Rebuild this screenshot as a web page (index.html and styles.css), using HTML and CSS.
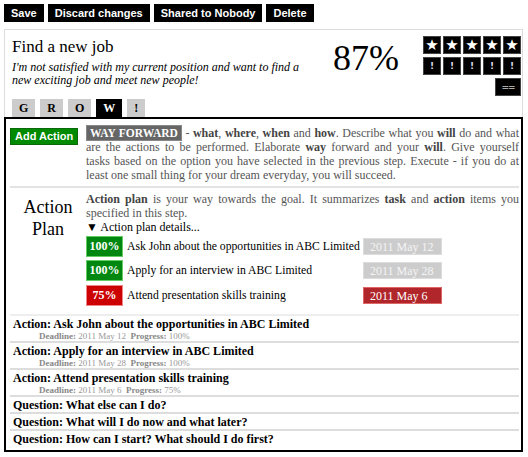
FILE: index.html
```html
<!DOCTYPE html>
<html>
<head>
<meta charset="utf-8">
<link rel="stylesheet" href="styles.css">
</head>
<body>
<div class="toolbar">
  <button class="tbtn">Save</button>
  <button class="tbtn">Discard changes</button>
  <button class="tbtn">Shared to Nobody</button>
  <button class="tbtn">Delete</button>
</div>
<div class="goal">
  <div class="goal-head">
    <div class="goal-text">
      <h1 class="title">Find a new job</h1>
      <p class="subtitle">I'm not satisfied with my current position and want to find a new exciting job and meet new people!</p>
    </div>
    <div class="percent">87%</div>
    <div class="ratings">
      <div class="rrow">
        <span class="sq star">★</span><span class="sq star">★</span><span class="sq star">★</span><span class="sq star">★</span><span class="sq star">★</span>
      </div>
      <div class="rrow">
        <span class="sq bang">!</span><span class="sq bang">!</span><span class="sq bang">!</span><span class="sq bang">!</span><span class="sq bang">!</span>
      </div>
      <div class="rrow">
        <span class="sq eq">==</span>
      </div>
    </div>
  </div>
  <div class="tabs">
    <span class="tab">G</span><span class="tab">R</span><span class="tab">O</span><span class="tab active">W</span><span class="tab">!</span>
  </div>
</div>
<div class="main">
  <div class="sec">
    <div class="side"><button class="add">Add Action</button></div>
    <p class="desc">
      <span class="ln"><span class="wf">WAY FORWARD</span> - <b>what</b>, <b>where</b>, <b>when</b> and <b>how</b>. Describe what you <b>will</b> do and what</span>
      <span class="ln">are the actions to be performed. Elaborate <b>way</b> forward and your <b>will</b>. Give yourself</span>
      <span class="ln">tasks based on the option you have selected in the previous step. Execute - if you do at</span>
      <span class="ln last">least one small thing for your dream everyday, you will succeed.</span>
    </p>
  </div>
  <div class="sec plan">
    <div class="side"><div class="plan-title">Action Plan</div></div>
    <div class="plan-body">
      <p class="desc"><b>Action plan</b> is your way towards the goal. It summarizes <b>task</b> and <b>action</b> items you specified in this step.</p>
      <div class="details">▼ Action plan details...</div>
      <div class="prow"><span class="badge ok">100%</span><span class="ptext">Ask John about the opportunities in ABC Limited</span><span class="date">2011 May 12</span></div>
      <div class="prow"><span class="badge ok">100%</span><span class="ptext">Apply for an interview in ABC Limited</span><span class="date">2011 May 28</span></div>
      <div class="prow"><span class="badge bad">75%</span><span class="ptext">Attend presentation skills training</span><span class="date late">2011 May 6</span></div>
    </div>
  </div>
  <div class="list">
    <div class="item first">
      <div class="ititle">Action: Ask John about the opportunities in ABC Limited</div>
      <div class="meta"><b>Deadline:</b> 2011 May 12 &nbsp;<b>Progress:</b> 100%</div>
    </div>
    <div class="item">
      <div class="ititle">Action: Apply for an interview in ABC Limited</div>
      <div class="meta"><b>Deadline:</b> 2011 May 28 &nbsp;<b>Progress:</b> 100%</div>
    </div>
    <div class="item">
      <div class="ititle">Action: Attend presentation skills training</div>
      <div class="meta"><b>Deadline:</b> 2011 May 6 &nbsp;<b>Progress:</b> 75%</div>
    </div>
    <div class="item"><div class="ititle">Question: What else can I do?</div></div>
    <div class="item"><div class="ititle">Question: What will I do now and what later?</div></div>
    <div class="item"><div class="ititle">Question: How can I start? What should I do first?</div></div>
  </div>
</div>
</body>
</html>
```
FILE: styles.css
```css
* { box-sizing: border-box; }
body {
  margin: 0;
  padding: 4px;
  font-family: "Liberation Serif", serif;
  color: #000;
  background: #fff;
  width: 528px;
}
.toolbar { display: flex; gap: 4px; }
.tbtn {
  height: 18px;
  padding: 0 7px;
  border: 0;
  background: #000;
  color: #fff;
  font: bold 11px "Liberation Sans", Arial, sans-serif;
}
.goal {
  margin-top: 7px;
  border-top: 1px solid #ddd;
  border-left: 1px solid #ddd;
  border-right: 1px solid #ddd;
  width: 519px;
}
.goal-head { display: flex; padding: 6px 1px 0 7px; }
.goal-text { width: 295px; flex: none; }
.title { margin: 0; font-weight: normal; font-size: 17px; line-height: 22px; }
.subtitle { margin: 3px 0 0; font-style: italic; font-size: 12px; line-height: 13px; }
.percent { font-size: 36px; line-height: 40px; margin: 2px 0 0 26px; width: 80px; flex: none; }
.ratings { display: flex; flex-direction: column; align-items: flex-end; gap: 3px; margin-left: auto; }
.rrow { display: flex; gap: 2px; }
.sq {
  width: 18px; height: 18px;
  background: #000;
  border: 1px solid #444;
  color: #fff;
  display: flex; align-items: center; justify-content: center;
  font: 15px "DejaVu Sans", sans-serif;
}
.bang { font: bold 9px "DejaVu Sans", sans-serif; color: #dde; }
.eq { width: 26px; font: bold 9px "DejaVu Sans", sans-serif; letter-spacing: -1px; color: #aaa; }
.tabs { display: flex; gap: 5px; padding-left: 7px; margin-top: 3px; }
.tab {
  height: 18px; padding: 0 7px;
  background: #ccc;
  font-weight: bold; font-size: 12px; line-height: 19px;
}
.tab.active { background: #000; color: #fff; }
.main {
  border: 2px solid #000;
  width: 519px;
  padding: 7px 2px 4px 4px;
}
.sec { display: flex; }
.side { width: 76px; flex: none; }
.add {
  height: 17px; margin-top: -1px;
  background: #008a00; color: #fff; border: 1px solid #0a6a0a;
  font: bold 11px "Liberation Sans", Arial, sans-serif; padding: 0 4px;
}
.desc {
  margin: 0; flex: 1;
  text-align: justify;
  color: #555; font-size: 12px; line-height: 14px;
}
.ln { display: block; text-align: justify; text-align-last: justify; }
.ln.last { text-align-last: left; }
.desc b { color: #444; }
.wf { background: #666; color: #fff; font-weight: bold; font-size: 11.5px; padding: 1px 3px; border: 1px solid #888; }
.plan { border-top: 2px solid #e3e3e3; margin-top: 4px; padding-top: 4px; }
.plan-title { font-size: 18px; line-height: 22px; text-align: center; padding-top: 4px; }
.plan-body { flex: 1; }
.details { font-size: 12px; line-height: 14px; }
.prow { display: flex; align-items: center; height: 24.5px; font-size: 12px; }
.badge {
  width: 37px; height: 21px; flex: none;
  color: #fff; font-weight: bold; font-size: 12px;
  display: flex; align-items: center; justify-content: center;
  border: 1px solid #6c6;
}
.badge.ok { background: #00870f; }
.badge.bad { background: #cc0000; border-color: #e88; }
.ptext { width: 240px; padding-left: 4px; white-space: nowrap; flex: none; font-size: 11.7px; }
.date {
  width: 79px; height: 17px; background: #ccc; color: #f4f4f4;
  padding-left: 6px; line-height: 16px; font-size: 12px;
  border: 1px solid #ddd;
}
.date.late { background: #b0262a; border-color: #d66; color: #fff; }
.list { margin-top: 6px; }
.item { border-top: 2px solid #ddd; padding: 1px 0 0 3px; }
.item.first { border-top-color: #eee; }
.ititle { font-weight: bold; font-size: 12px; line-height: 14px; }
.meta { font-size: 9px; line-height: 10px; color: #999; padding-left: 26px; }
.meta b { color: #888; }
```
